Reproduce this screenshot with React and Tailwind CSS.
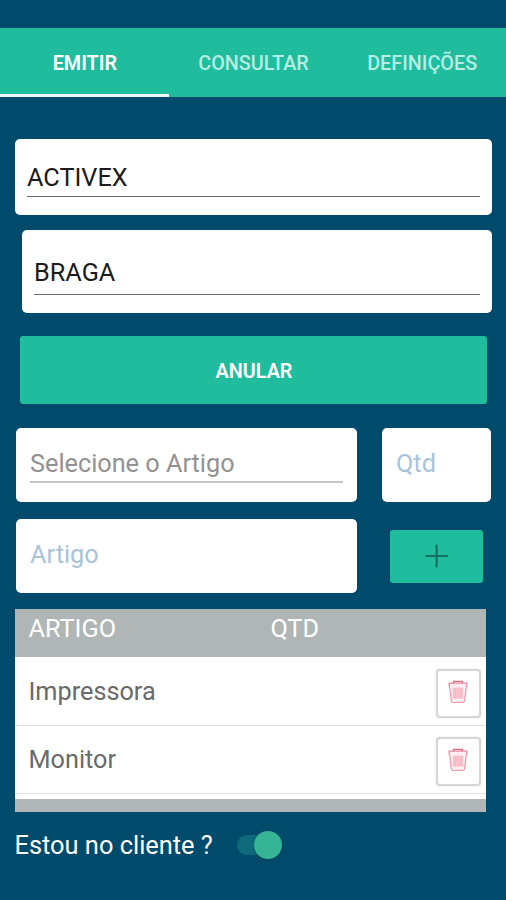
import { useState } from 'react';

const TABS = ['EMITIR', 'CONSULTAR', 'DEFINIÇÕES'];

const ITEMS = [
  { id: 1, name: 'Impressora' },
  { id: 2, name: 'Monitor' },
];

const TrashIcon = () => (
  <svg width="20" height="25" viewBox="0 0 20 25" fill="none">
    <path d="M2.2 4h15.6l-1 17.6H3.2z" fill="#fdeef1" />
    <path d="M4.8 7.6h10.4v10.9H4.8z" fill="#f8c3cd" />
    <path d="M1.7 6.5l1.6 14c.1 1.3.8 1.9 2 1.9h9.4c1.2 0 1.9-.6 2-1.9l1.6-14" stroke="#ee9dad" strokeWidth="1.3" />
    <path d="M1.2 7V3.2h17.6V7" stroke="#e9849a" strokeWidth="1.2" />
    <path d="M5.6 3V1.4h8.8V3" stroke="#dd6a82" strokeWidth="1.4" />
    <path d="M7.2 8v10.5M10 8v10.5M12.8 8v10.5" stroke="#f5b4c0" strokeWidth="0.8" />
  </svg>
);

export default function App() {
  const [tab, setTab] = useState(0);
  const [atClient, setAtClient] = useState(true);

  return (
    <div className="h-[900px] w-[506px] overflow-hidden bg-[#004b6b] pt-7 font-[Roboto,sans-serif] text-[25.25px] leading-[30px]">
      {/* Tabs */}
      <nav className="grid h-[69px] grid-cols-3 bg-[#1fbc9e]">
        {TABS.map((label, i) => (
          <button
            key={label}
            onClick={() => setTab(i)}
            className={`border-b-[3.5px] pt-[6px] pl-px text-[19.8px] leading-6 whitespace-nowrap ${
              i === tab ? 'border-[#eefaf8] font-semibold text-white' : 'border-transparent font-medium text-[#b5ede2]'
            }`}
          >
            {label}
          </button>
        ))}
      </nav>

      {/* Cliente */}
      <div className="mt-[42px] ml-[15px] h-[76px] w-[477px] rounded-[5px] bg-white px-3 pt-6 text-[#1c1c1c]">
        <div className="border-b border-[#6c6c6c] pb-[3px]">ACTIVEX</div>
      </div>
      <div className="mt-[15px] ml-[22px] h-[83px] w-[470px] rounded-[5px] bg-white px-3 pt-7 text-[#1c1c1c]">
        <div className="border-b border-[#6c6c6c] pb-[6px]">BRAGA</div>
      </div>

      <button className="mt-[23px] ml-5 block h-[68px] w-[467px] rounded-[3px] bg-[#1fbc9e] pt-1 pl-px text-[19.8px] leading-6 font-semibold text-white">
        ANULAR
      </button>

      {/* Novo artigo */}
      <div className="mt-6 ml-4 flex gap-[25px]">
        <div className="h-[74px] w-[341px] rounded-[5px] bg-white px-[14px] pt-[21px] text-[#929292]">
          <div className="border-b-2 border-[#c8c8c8] pb-[2px]">Selecione o Artigo</div>
        </div>
        <div className="h-[74px] w-[109px] rounded-[5px] bg-white px-[14px] pt-[21px] text-[#a9c4d9]">Qtd</div>
      </div>
      <div className="mt-[17px] ml-4 flex items-center gap-[33px]">
        <div className="h-[74px] w-[341px] rounded-[5px] bg-white px-[14px] pt-[21px] text-[#a9c4d9]">Artigo</div>
        <button className="flex h-[53px] w-[93px] items-center justify-center rounded-[3px] bg-[#1fbc9e]">
          <svg width="24" height="24" viewBox="0 0 24 24" stroke="#14705f" strokeWidth="2.2">
            <path d="M11.6 .8v22.4M.4 12h22.4" />
          </svg>
        </button>
      </div>

      {/* Lista de artigos */}
      <div className="mt-4 ml-[15px] h-[203px] w-[471px] bg-[#b0b6b6]">
        <div className="flex h-12 pt-[5px] pl-[13.5px] text-white">
          <span className="w-[242px]">ARTIGO</span>
          <span>QTD</span>
        </div>
        <div className="h-[142px] bg-white text-[#6a6a6a]">
          {ITEMS.map((item) => (
            <div
              key={item.id}
              className="flex h-[68px] items-center justify-between pr-[5px] pl-[13.5px] shadow-[0_1px_0_#e2e2e2]"
            >
              <span className="pt-px">{item.name}</span>
              <button className="mt-[5px] flex h-[49px] w-[45px] justify-center rounded-[4px] border-2 border-[#d6d6d6] bg-white pt-[9px] pr-[2px] shadow-[0_0_2px_#dddddd]">
                <TrashIcon />
              </button>
            </div>
          ))}
        </div>
      </div>

      <div className="mt-[18px] ml-[14.5px] flex items-center text-[25.4px] text-white">
        <span className="w-[222.5px]">Estou no cliente ?</span>
        <button
          role="switch"
          aria-checked={atClient}
          onClick={() => setAtClient(!atClient)}
          className={`flex h-5 w-[45px] items-center rounded-full bg-[linear-gradient(90deg,#0f6b7c_36px,transparent_36px)] ${
            atClient ? 'justify-end' : 'justify-start'
          }`}
        >
          <span className="size-7 shrink-0 rounded-full bg-[#35b595] shadow-[0_1px_2px_#00385080]" />
        </button>
      </div>
    </div>
  );
}
